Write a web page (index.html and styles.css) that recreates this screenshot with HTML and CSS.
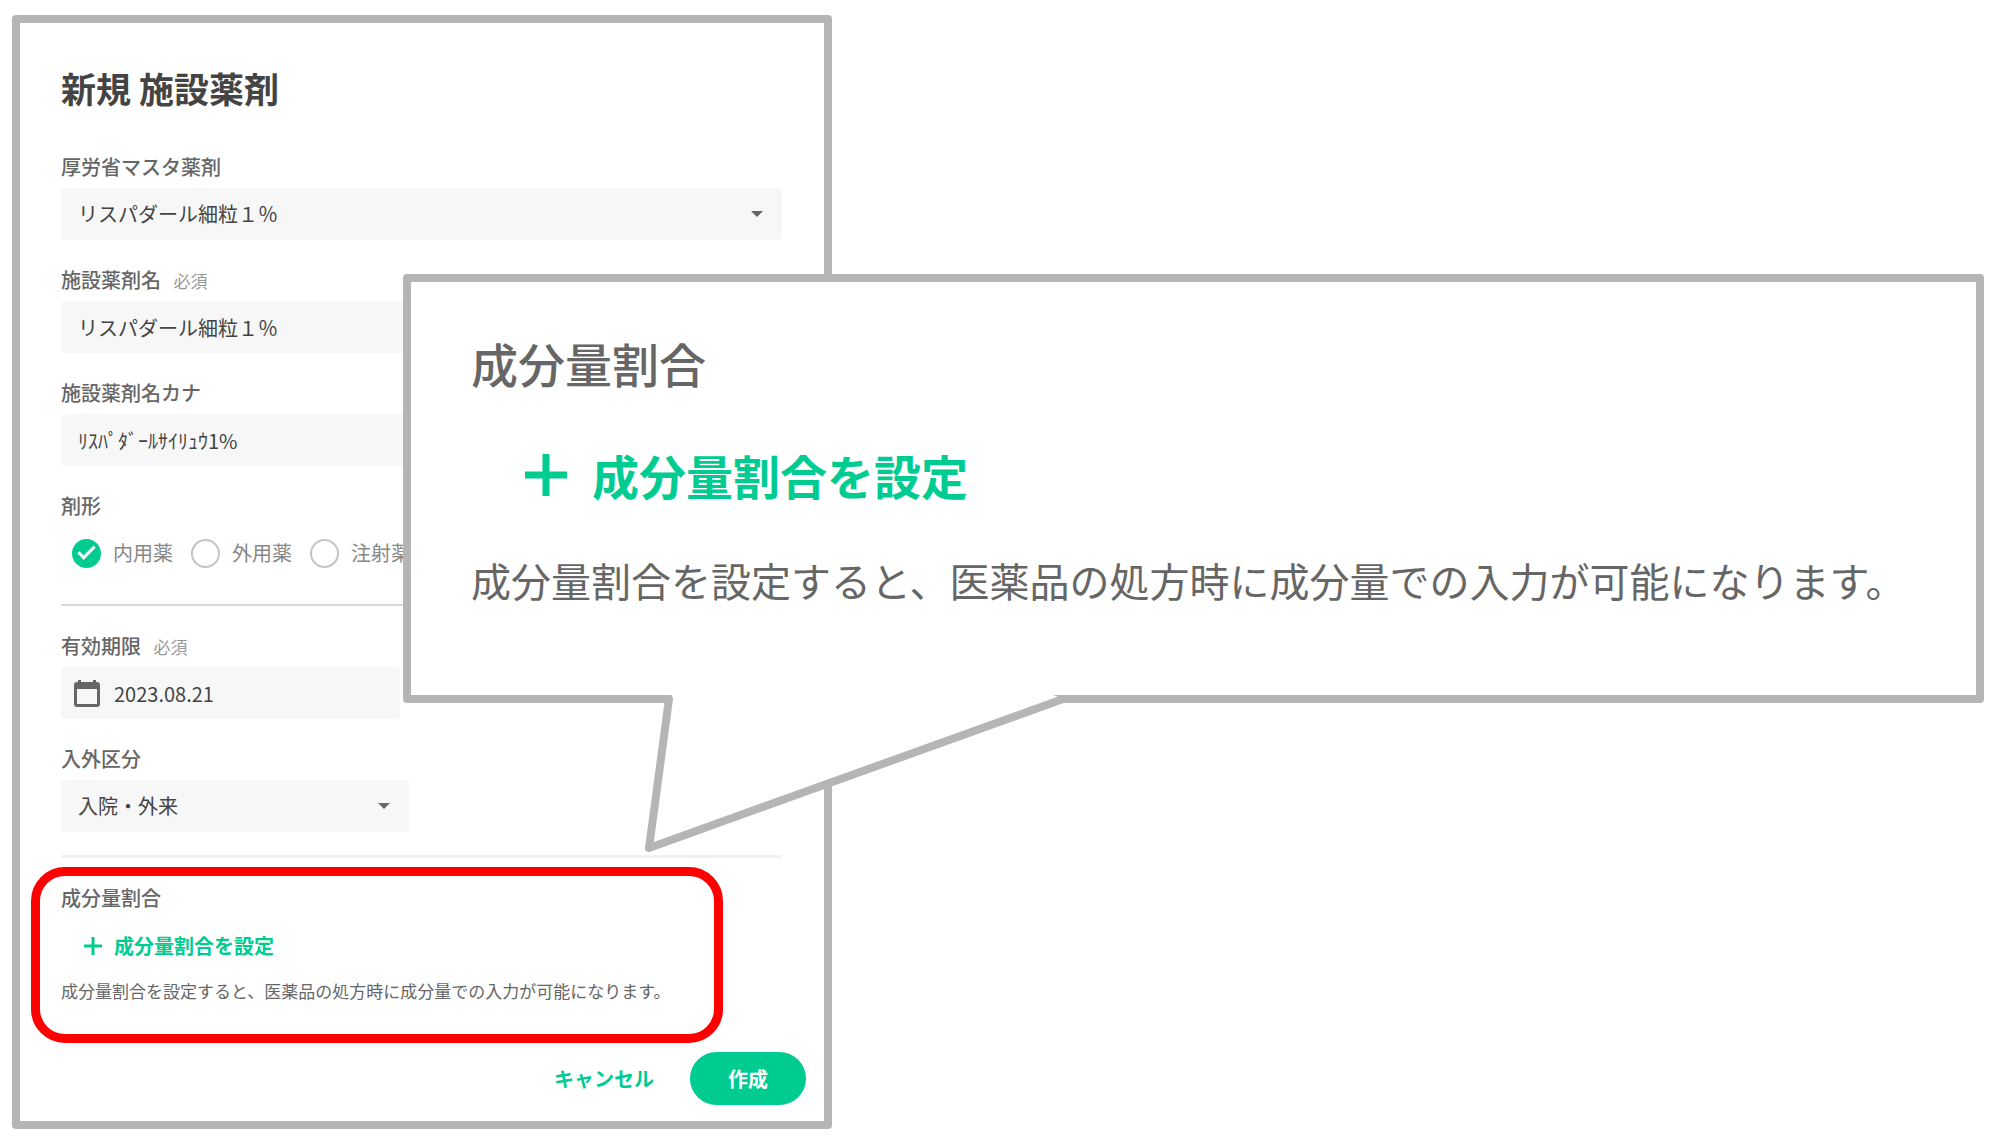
FILE: index.html
```html
<!DOCTYPE html>
<html lang="ja">
<head>
  <meta charset="UTF-8">
  <meta name="viewport" content="width=device-width, initial-scale=1.0">
  <title>新規 施設薬剤</title>
  <link rel="stylesheet" href="styles.css">
</head>
<body>
  <!-- 薬剤登録ダイアログ -->
  <main class="dialog">
    <h1 class="title">新規 施設薬剤</h1>

    <form class="form">
      <div class="field">
        <label class="label" for="master">厚労省マスタ薬剤</label>
        <div class="select">
          <select id="master" class="control">
            <option>リスパダール細粒１％</option>
          </select>
        </div>
      </div>

      <div class="field">
        <label class="label" for="name">施設薬剤名 <span class="required">必須</span></label>
        <input id="name" class="control" type="text" value="リスパダール細粒１％">
      </div>

      <div class="field">
        <label class="label" for="kana">施設薬剤名カナ</label>
        <input id="kana" class="control" type="text" value="ﾘｽﾊﾟﾀﾞｰﾙｻｲﾘｭｳ1%">
      </div>

      <fieldset class="field radios">
        <legend class="label">剤形</legend>
        <div class="radio-list">
          <label class="radio"><input type="radio" name="form" checked>内用薬</label>
          <label class="radio"><input type="radio" name="form">外用薬</label>
          <label class="radio"><input type="radio" name="form">注射薬</label>
        </div>
      </fieldset>

      <hr class="line">

      <div class="field">
        <label class="label" for="expiry">有効期限 <span class="required">必須</span></label>
        <div class="date">
          <svg class="calendar" viewBox="0 0 26 28" aria-hidden="true">
            <path fill="#666" d="M4 0h3v2h12V0h3v2h1a3 3 0 0 1 3 3v19a3 3 0 0 1-3 3H3a3 3 0 0 1-3-3V5a3 3 0 0 1 3-3h1zM3 9v15h20V9z"/>
          </svg>
          <input id="expiry" class="control" type="text" value="2023.08.21">
        </div>
      </div>

      <div class="field">
        <label class="label" for="kubun">入外区分</label>
        <div class="select short">
          <select id="kubun" class="control">
            <option>入院・外来</option>
          </select>
        </div>
      </div>

      <hr class="line light">

      <section class="ratio marked">
        <h2 class="label">成分量割合</h2>
        <button class="add" type="button">
          <svg class="plus" viewBox="0 0 18 18" aria-hidden="true"><path d="M9 0v18M0 9h18"/></svg>
          成分量割合を設定
        </button>
        <p class="note">成分量割合を設定すると、医薬品の処方時に成分量での入力が可能になります。</p>
      </section>
    </form>

    <div class="actions">
      <button class="cancel" type="button">キャンセル</button>
      <button class="submit" type="button">作成</button>
    </div>
  </main>

  <!-- 拡大表示の吹き出し -->
  <aside class="callout">
    <svg class="tail" viewBox="0 0 410 160" aria-hidden="true">
      <path class="tail-fill" d="M10-1 6 4-14 153 400 4 388-1z"/>
      <path class="tail-line" d="M6 4-14 153 400 4"/>
    </svg>
    <h2 class="callout-title">成分量割合</h2>
    <button class="add large" type="button">
      <svg class="plus" viewBox="0 0 18 18" aria-hidden="true"><path d="M9 0v18M0 9h18"/></svg>
      成分量割合を設定
    </button>
    <p class="callout-note">成分量割合を設定すると、医薬品の処方時に成分量での入力が可能になります。</p>
  </aside>
</body>
</html>
```

FILE: styles.css
```css
*,
*::before {
  box-sizing: border-box;
}

body {
  position: relative;
  margin: 0;
  padding: 15px 12px;
  background: #fff;
  color: #444;
  font-family: "Noto Sans CJK JP", sans-serif;
  font-size: 20px;
  line-height: 30px;
}

h1, h2, p {
  margin: 0;
}

button, input, select {
  font: inherit;
  color: inherit;
}

button {
  border: 0;
  background: none;
  cursor: pointer;
}

/* ダイアログ */
.dialog {
  width: 820px;
  max-width: 100%;
  padding: 40px 18px 16px 41px;
  border: 8px solid #b5b5b5;
  border-radius: 4px;
}

.title {
  margin-bottom: 39px;
  font-size: 35px;
  font-weight: 700;
  line-height: 50px;
}

.form {
  max-width: 721px;
}

.field {
  margin-bottom: 25px;
}

.label {
  display: block;
  margin-bottom: 6px;
  padding: 0;
  color: #666;
  font-size: 20px;
  font-weight: 500;
}

.required {
  margin-left: 8px;
  color: #999;
  font-size: 17px;
  font-weight: 400;
  line-height: 1;
}

.control {
  display: block;
  width: 100%;
  height: 52px;
  padding: 0 17px;
  border: 0;
  border-radius: 4px;
  background: #f7f7f7;
  appearance: none;
}

.select {
  position: relative;
}

.select::after {
  content: "";
  position: absolute;
  top: 23px;
  right: 19px;
  border: 6px solid transparent;
  border-top-color: #666;
  border-bottom: 0;
}

.short {
  width: 348px;
}

/* 剤形 */
.radios {
  margin: 0 0 25px;
  padding: 0;
  border: 0;
}

.radio-list {
  display: flex;
  gap: 18px;
  height: 52px;
  padding-left: 11px;
}

.radio {
  display: flex;
  align-items: center;
  gap: 12px;
  color: #888;
}

.radio input {
  width: 29px;
  height: 29px;
  margin: 0;
  border: 2px solid #c4c4c4;
  border-radius: 50%;
  appearance: none;
}

.radio input:checked {
  display: grid;
  place-items: center;
  border: 0;
  background: #00cc92;
}

.radio input:checked::after {
  content: "";
  width: 14px;
  height: 6px;
  margin-bottom: 5px;
  border: solid #fff;
  border-width: 0 0 3px 3px;
  transform: rotate(-45deg);
}

.line {
  height: 2px;
  margin: 0 0 25px;
  border: 0;
  background: #d9d9d9;
}

.light {
  height: 3px;
  margin-top: -2px;
  background: #f2f2f2;
}

/* 有効期限 */
.date {
  position: relative;
  width: 339px;
}

.date .control {
  padding-left: 53px;
}

.calendar {
  position: absolute;
  top: 13px;
  left: 13px;
  width: 26px;
  height: 28px;
}

/* 成分量割合 */
.ratio {
  position: relative;
}

.marked::before {
  content: "";
  position: absolute;
  top: -16px;
  left: -30px;
  width: 692px;
  height: 176px;
  border: 9px solid #f00;
  border-radius: 34px;
  pointer-events: none;
}

.add {
  display: flex;
  align-items: center;
  gap: 12px;
  padding: 12px 23px 15px;
  color: #00cc92;
  font-weight: 700;
}

.plus {
  width: 18px;
  height: 18px;
  fill: none;
  stroke: currentColor;
  stroke-width: 3;
}

.note {
  color: #666;
  font-size: 17px;
  white-space: nowrap;
}

.actions {
  display: flex;
  justify-content: flex-end;
  gap: 14px;
  margin-top: 46px;
}

.actions button {
  height: 53px;
  font-weight: 700;
}

.cancel {
  padding: 0 22px;
  color: #00cc92;
}

.submit {
  padding: 0 38px;
  border-radius: 27px;
  background: #00cc92;
  color: #fff;
}

/* 吹き出し */
.callout {
  position: absolute;
  top: 274px;
  left: 403px;
  right: 16px;
  padding: 46px 60px 85px;
  border: 8px solid #b5b5b5;
  border-radius: 4px;
  background: #fff;
  color: #666;
}

.tail {
  position: absolute;
  top: 100%;
  left: 252px;
  width: 410px;
  height: 160px;
  overflow: visible;
}

.tail-fill {
  fill: #fff;
}

.tail-line {
  fill: none;
  stroke: #b5b5b5;
  stroke-width: 8;
  stroke-linecap: round;
  stroke-linejoin: round;
}

.callout-title {
  font-size: 47px;
  font-weight: 500;
  line-height: 70px;
}

.large {
  gap: 25px;
  padding: 49px 54px 47px;
  font-size: 47px;
  line-height: 56px;
}

.large .plus {
  width: 42px;
  height: 42px;
}

.callout-note {
  font-size: 40px;
  line-height: 60px;
  white-space: nowrap;
}
```
